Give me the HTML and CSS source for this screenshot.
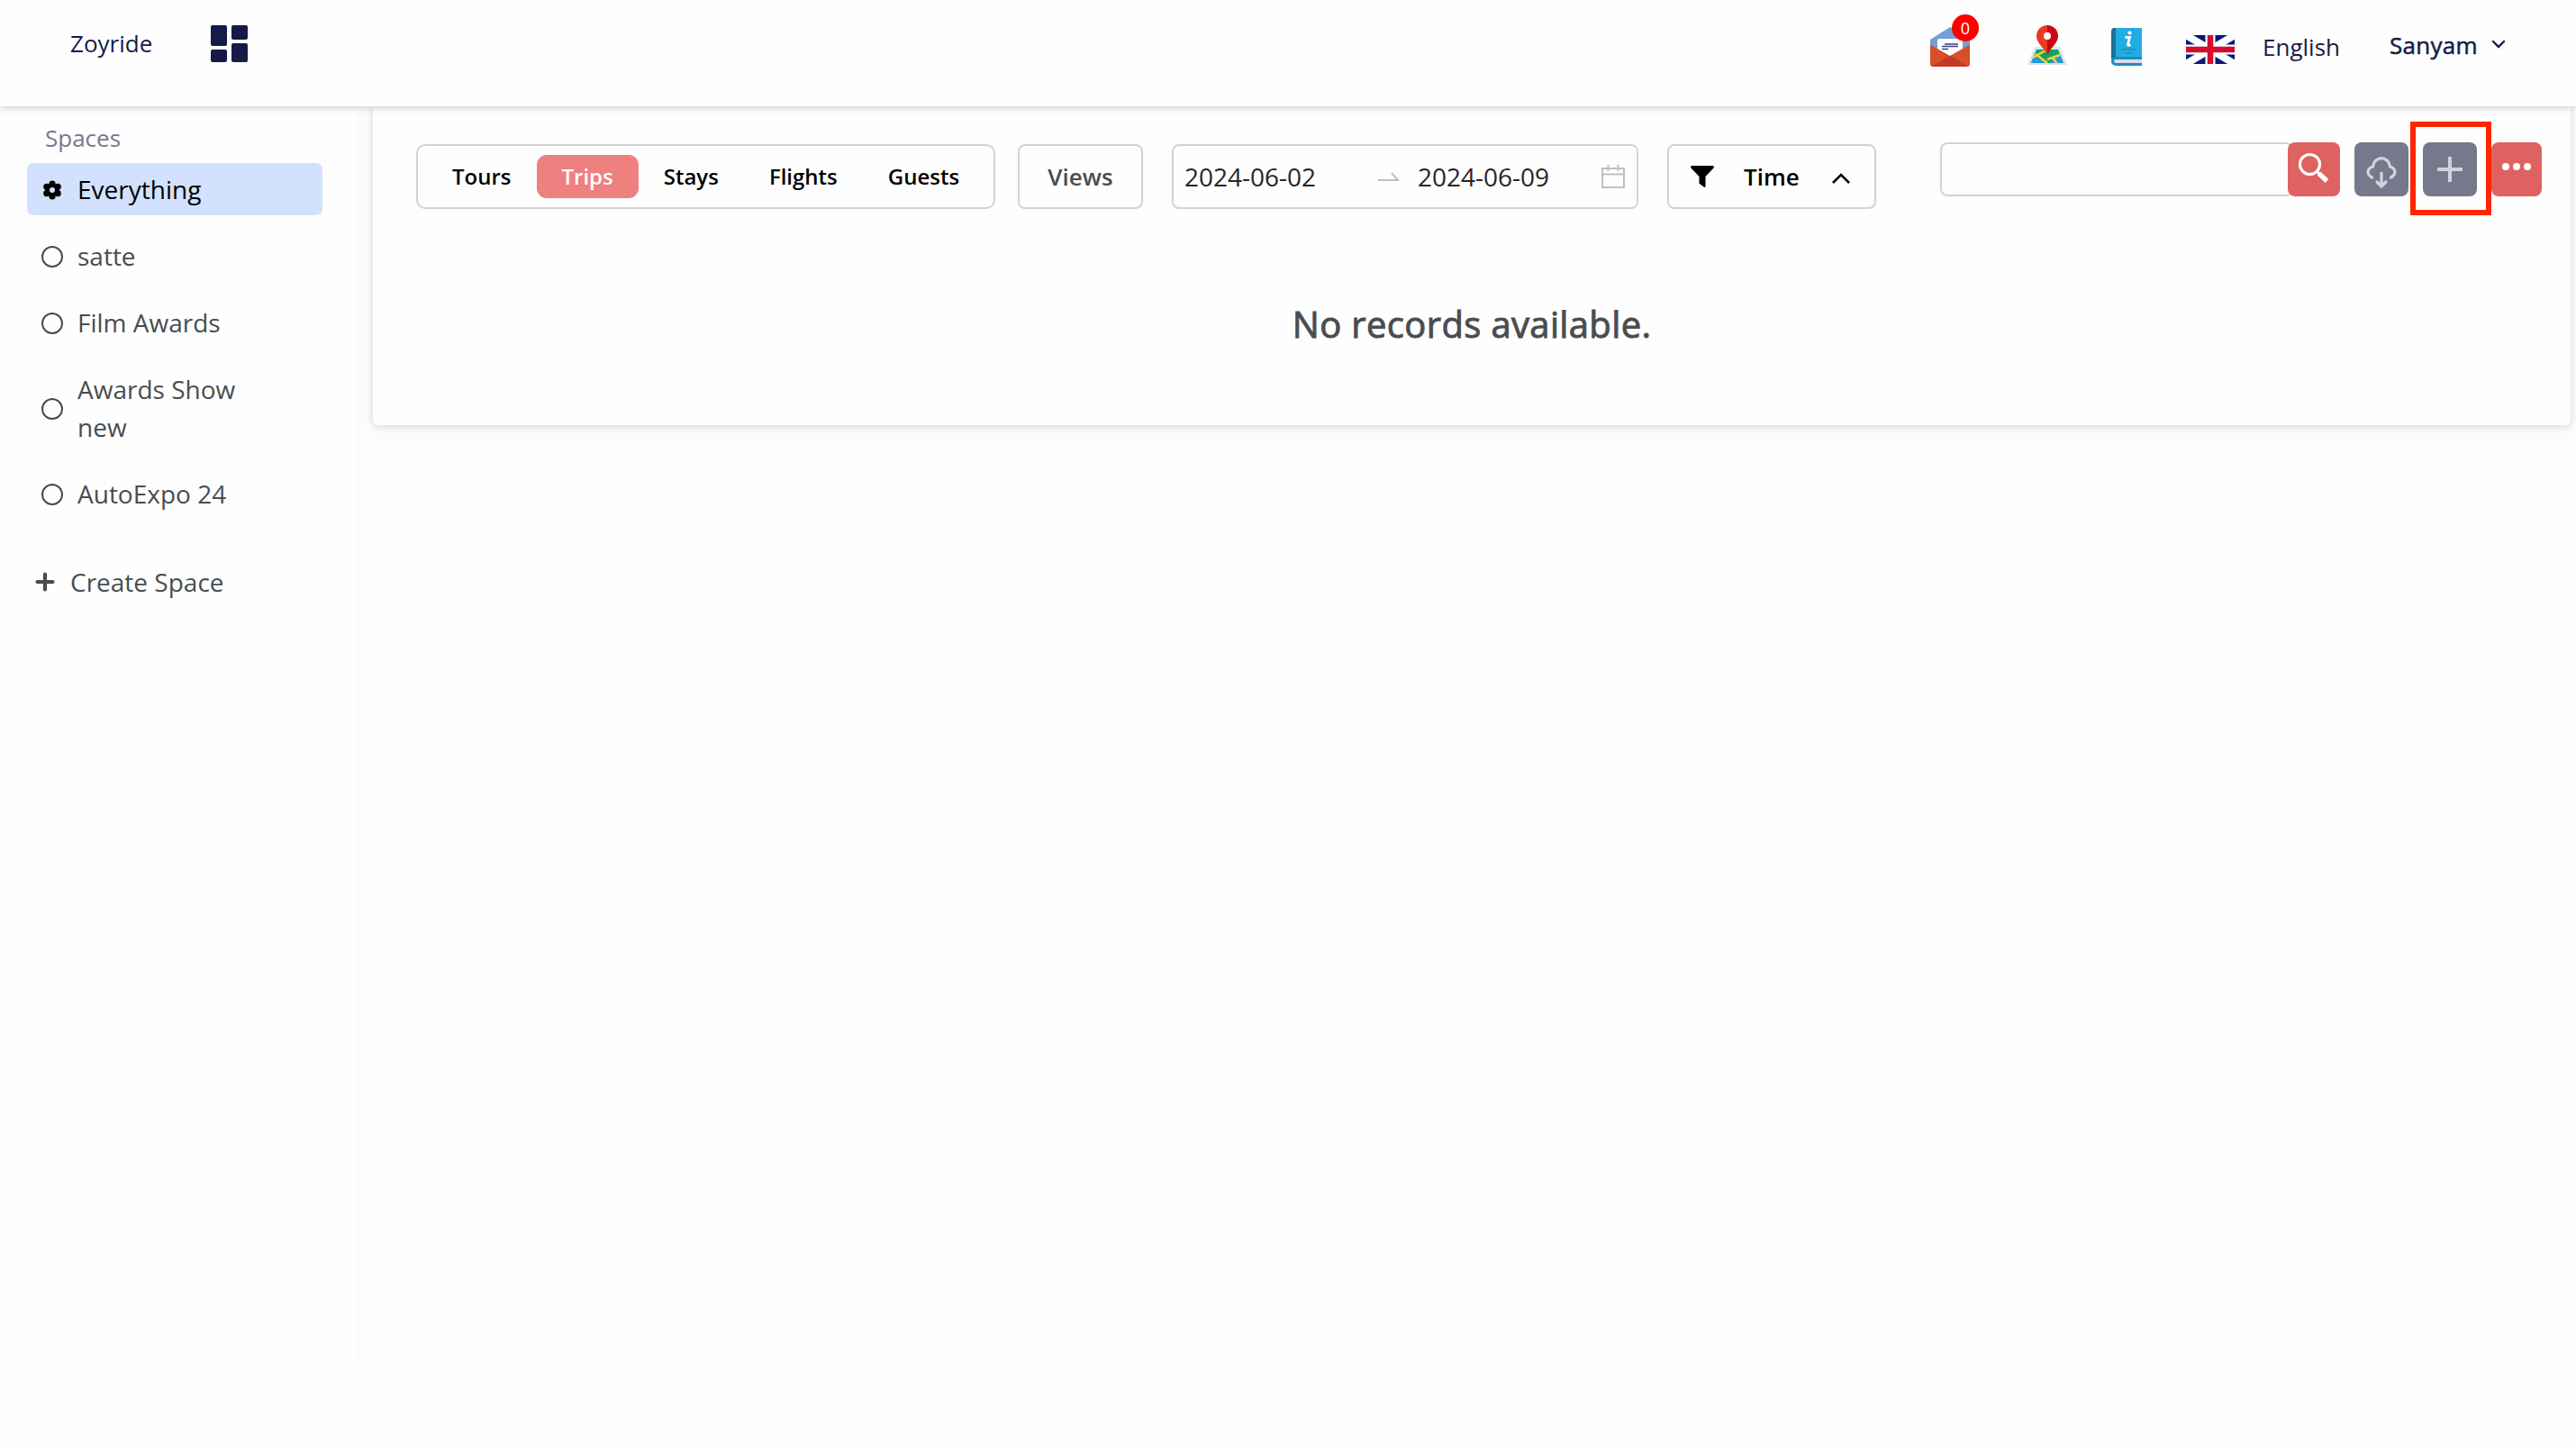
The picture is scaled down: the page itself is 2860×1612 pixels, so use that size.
FILE: index.html
```html
<!DOCTYPE html>
<html lang="en">
  <head>
    <meta charset="UTF-8" />
    <meta name="viewport" content="width=device-width, initial-scale=1.0" />
    <title>Zoyride</title>
    <link rel="stylesheet" href="styles.css">
  </head>
  <body>
    <header class="topbar">
      <a class="brand">Zoyride</a>
      <svg class="dashboard-icon" viewBox="0 0 41 41" fill="#161a49">
        <rect width="18" height="23" rx="2" />
        <rect x="23" width="18" height="16" rx="2" />
        <rect y="27" width="18" height="14" rx="2" />
        <rect x="23" y="20" width="18" height="21" rx="2" />
      </svg>

      <div class="topbar-right">
        <div class="mail">
          <svg width="44" height="44" viewBox="0 0 44 44">
            <path d="M0 14 22 0l22 14v10H0z" fill="#739fd6" />
            <rect x="8" y="13" width="28" height="26" rx="2" fill="#fff" />
            <path d="M16 19h15M13 21.500h18M13 24.500h7" stroke="#3f3f7d" stroke-width="1.700" />
            <path d="M0 19.500 22 32l22-12.500V41a3 3 0 0 1-3 3H3a3 3 0 0 1-3-3z" fill="#d84f2b" />
            <path d="M2 43.500 22 32l20 11.500-1 .5H3z" fill="#c13a27" />
          </svg>
          <span class="badge">0</span>
        </div>

        <!-- map -->
        <svg class="map" width="44" height="46" viewBox="0 0 44 46">
          <path d="M8 24h28l8 20H0z" fill="#d5e5f7" />
          <path d="M10 27h24l6 15H4z" fill="#12a45b" />
          <path d="M4 42l3-8 14 8z" fill="#2499dc" />
          <path d="M30 33l7 2 3 7H25z" fill="#2499dc" />
          <path d="M6 36l14-8M9 32l13 10M22 38l14-5M28 36l5 7" stroke="#f5cf48" stroke-width="2.500" />
          <path d="M22 34c-1-7-12-13-12-22a12 12 0 0 1 12-12z" fill="#e93a1f" />
          <path d="M22 34c1-7 12-13 12-22A12 12 0 0 0 22 0z" fill="#c90813" />
          <circle cx="22" cy="12" r="4" fill="#fff" />
        </svg>

        <!-- guide book -->
        <svg class="book" width="34" height="42" viewBox="0 0 34 42">
          <path d="M4 0h29a1 1 0 0 1 1 1v33H4a4 4 0 0 1-4-1V4a4 4 0 0 1 4-4z" fill="#22ade2" />
          <path d="M4 0h1v33H4a4 4 0 0 0-4 4V4a4 4 0 0 1 4-4z" fill="#1b7197" />
          <path d="M5 32h29v10H5a5 5 0 0 1 0-10z" fill="#1b8dba" />
          <path d="M5 35h29v4H5a2 2 0 0 1 0-4z" fill="#d5dcf0" />
          <circle cx="20.500" cy="5.500" r="2.100" fill="#fff" />
          <path d="M15.500 10.500h5l-2 8q0 1.500 3 0" fill="none" stroke="#fff" stroke-width="2.800" />
          <path d="M11 24h16M15 28h8" stroke="#1b7fa8" stroke-width="1.200" />
        </svg>

        <!-- language -->
        <svg class="flag" width="54" height="32" viewBox="0 0 54 32">
          <rect width="54" height="32" fill="#001b7a" />
          <path d="M0 0l54 32M54 0L0 32" stroke="#fff" stroke-width="8" />
          <path d="M27 0v32M0 16h54" stroke="#fff" stroke-width="11" />
          <path d="M27 0v32M0 16h54" stroke="#d30d2c" stroke-width="6.500" />
        </svg>
        <span class="language">English</span>
        <span class="user">Sanyam</span>
        <svg class="user-arrow" width="16" height="10" viewBox="0 0 16 10" fill="none" stroke="#161a49" stroke-width="2.400">
          <path d="M2 2l6 6 6-6" stroke-linecap="round" />
        </svg>
      </div>
    </header>

    <div class="layout">
      <aside class="sidebar">
        <h2 class="sidebar-title">Spaces</h2>
        <ul class="spaces">
          <li class="active">
            <svg class="gear" width="20" height="22" viewBox="0 0 20 22">
              <g fill="#000">
                <circle cx="10" cy="11" r="7.500" />
                <circle cx="10" cy="4" r="3.600" />
                <circle cx="10" cy="18" r="3.600" />
                <circle cx="3.800" cy="7.300" r="3.600" />
                <circle cx="16.200" cy="7.300" r="3.600" />
                <circle cx="3.800" cy="14.700" r="3.600" />
                <circle cx="16.200" cy="14.700" r="3.600" />
              </g>
              <circle cx="10" cy="11" r="3" fill="#d2e1fd" />
            </svg>
            <span>Everything</span>
          </li>
          <li><i class="ring"></i><span>satte</span></li>
          <li><i class="ring"></i><span>Film Awards</span></li>
          <li><i class="ring"></i><span>Awards Show new</span></li>
          <li><i class="ring"></i><span>AutoExpo 24</span></li>
        </ul>
        <a class="create-space">
          <svg width="22" height="22" viewBox="0 0 22 22" stroke="#484d50" stroke-width="4.200" stroke-linecap="round">
            <path d="M11 2.500v17M2.500 11h17" />
          </svg>
          <span>Create Space</span>
        </a>
      </aside>

      <main class="content">
        <section class="card">
          <div class="toolbar">
            <nav class="tabs">
              <a class="tab">Tours</a>
              <a class="tab selected">Trips</a>
              <a class="tab">Stays</a>
              <a class="tab">Flights</a>
              <a class="tab">Guests</a>
            </nav>
            <button class="views">Views</button>
            <div class="date-range">
              <span class="date">2024-06-02</span>
              <svg class="range-arrow" width="24" height="12" viewBox="0 0 24 12" fill="none" stroke="#bfbfbf" stroke-width="2">
                <path d="M0 10h22l-7-8" />
              </svg>
              <span class="date">2024-06-09</span>
              <svg class="calendar" width="26" height="26" viewBox="0 0 26 26" fill="none" stroke="#bfbfbf" stroke-width="2">
                <path d="M1 4h24v21H1zM1 10.500h24M7.500 0v7M18.500 0v7" />
              </svg>
            </div>
            <button class="time">
              <svg width="26" height="24" viewBox="0 0 26 24">
                <path d="M1.500 0h23a1.400 1.400 0 0 1 1 2.400L16.500 12v11a1 1 0 0 1-1.600.7L10 20a1 1 0 0 1-.5-1v-7L.5 2.400A1.400 1.400 0 0 1 1.500 0z" />
              </svg>
              <span>Time</span>
              <svg class="time-arrow" width="20" height="12" viewBox="0 0 20 12" fill="none" stroke="#000" stroke-width="2.600">
                <path d="M1 11l9-9 9 9" />
              </svg>
            </button>

            <div class="actions">
              <input class="search-input" type="text" />
              <button class="btn search-btn">
                <svg width="36" height="36" viewBox="0 0 36 36" fill="none" stroke="#fff">
                  <circle cx="13.500" cy="13.500" r="11" stroke-width="3.200" />
                  <path d="M21.500 21.500l3 3" stroke-width="3" />
                  <path d="M23.500 23.500l9 8.500" stroke-width="5.200" />
                </svg>
              </button>
              <button class="btn cloud-btn">
                <svg width="34" height="36" viewBox="0 0 34 36" fill="none" stroke="#d2d4dc" stroke-width="3.200" stroke-linecap="round">
                  <path d="M6.500 23c-6-3-6-10 1-12C9-1.500 25-1.500 26.500 11c7 2 7 9 1 12" />
                  <path d="M17 18v14M12 28l5 5 5-5" />
                </svg>
              </button>
              <button class="btn add-btn">
                <svg width="28" height="28" viewBox="0 0 28 28" stroke="#d2d4dc" stroke-width="4">
                  <path d="M14 0v28M0 14h28" />
                </svg>
                <span class="highlight"></span>
              </button>
              <button class="btn more-btn">
                <svg width="32" height="8" viewBox="0 0 32 8" fill="#fff">
                  <circle cx="4" cy="4" r="4" />
                  <circle cx="16" cy="4" r="4" />
                  <circle cx="28" cy="4" r="4" />
                </svg>
              </button>
            </div>
          </div>
          <p class="empty">No records available.</p>
        </section>
      </main>
    </div>
  </body>
</html>
```
FILE: styles.css
```css
* {
  box-sizing: border-box;
}

body {
  margin: 0;
  background: #fefefe;
  font-family: "Open Sans", "Noto Sans", sans-serif;
  color: #484d50;
}

button {
  font-family: inherit;
  cursor: pointer;
}

svg {
  display: block;
  flex-shrink: 0;
}

/* top bar */
.topbar {
  position: relative;
  z-index: 10;
  display: flex;
  align-items: flex-start;
  height: 118px;
  padding: 0 78px 0 78px;
  background: #fefefe;
  box-shadow: 0 2px 8px rgba(0, 0, 0, 0.18);
  color: #161a49;
  font-size: 26px;
  line-height: 36px;
}

.brand {
  width: 156px;
  padding-top: 30px;
}

.dashboard-icon {
  width: 41px;
  height: 41px;
  margin-top: 28px;
}

.topbar-right {
  display: flex;
  align-items: flex-start;
  margin-left: auto;
}

.mail {
  position: relative;
  margin: 30px 64px 0 0;
}

.badge {
  position: absolute;
  top: -14px;
  left: 24px;
  width: 30px;
  height: 30px;
  border-radius: 50%;
  background: #fe0000;
  color: #fff;
  font-size: 18px;
  line-height: 30px;
  text-align: center;
}

.map {
  margin: 28px 49px 0 0;
}

.book {
  margin: 31px 49px 0 0;
}

.flag {
  margin: 39px 31px 0 0;
}

.language {
  width: 141px;
  padding-top: 34px;
}

.user {
  width: 113px;
  padding-top: 32px;
  letter-spacing: 0.3px;
  -webkit-text-stroke: 0.5px #161a49;
}

.user-arrow {
  margin-top: 44px;
}

/* page */
.layout {
  display: flex;
  height: 1395px;
}

.sidebar {
  width: 396px;
  padding: 16px 38px 0 30px;
  font-size: 28px;
  line-height: 42px;
}

.sidebar-title {
  margin: 0 0 8px 20px;
  color: #77788c;
  font-size: 26px;
  font-weight: 400;
  line-height: 39px;
}

.spaces {
  margin: 0;
  padding: 0;
  list-style: none;
}

.spaces li {
  display: flex;
  align-items: center;
  gap: 16px;
  margin-bottom: 16px;
  padding: 8px 56px 8px 16px;
  border-radius: 7px;
}

.spaces .active {
  background: #d2e1fd;
  color: #000;
}

.gear {
  margin: 2px 2px 0;
}

.ring {
  flex-shrink: 0;
  width: 24px;
  height: 24px;
  margin-top: 2px;
  border: 2px solid #484d50;
  border-radius: 50%;
}

.create-space {
  display: flex;
  align-items: center;
  gap: 17px;
  margin: 48px 0 0 9px;
}

.content {
  flex: 1;
  padding: 0 6px 0 18px;
  background: #fcfcfe;
}

.card {
  height: 354px;
  background: #fefefe;
  border-radius: 0 0 6px 6px;
  box-shadow: 0 2px 8px rgba(40, 45, 70, 0.18);
}

/* toolbar */
.toolbar {
  display: flex;
  align-items: flex-start;
  padding: 42px 32px 0 48px;
}

.tabs,
.views,
.date-range,
.time {
  display: flex;
  align-items: center;
  height: 72px;
  border: 2px solid #d3d3d3;
  border-radius: 8px;
  background: #fefefe;
}

.tabs {
  width: 643px;
  padding-left: 10px;
  border-radius: 10px;
}

.tab {
  padding: 0 28px;
  border-radius: 11px;
  color: #000;
  font-size: 24px;
  font-weight: 600;
  line-height: 48px;
}

.tab.selected {
  background: #ef8080;
  color: #fff;
}

.views {
  justify-content: center;
  width: 139px;
  margin-left: 25px;
  color: #484d50;
  font-size: 26px;
  font-weight: 600;
}

.date-range {
  width: 518px;
  margin-left: 32px;
  padding-left: 12px;
  color: #262626;
  font-size: 28px;
}

.date {
  width: 148px;
}

.range-arrow {
  margin: 0 20px 0 67px;
}

.calendar {
  margin-left: 56px;
}

.time {
  width: 232px;
  margin-left: 32px;
  padding: 0 0 0 24px;
  color: #000;
  font-size: 26px;
  font-weight: 600;
}

.time span {
  width: 98px;
  margin-left: 33px;
  text-align: left;
}

.time-arrow {
  margin-top: 3px;
}

.actions {
  display: flex;
  margin: -2px 0 0 auto;
}

.search-input {
  width: 392px;
  height: 60px;
  border: 2px solid #d0d3d6;
  border-radius: 8px;
  background: #fefefe;
}

.btn {
  display: flex;
  justify-content: center;
  position: relative;
  width: 60px;
  height: 60px;
  padding: 0;
  border: none;
  border-radius: 8px;
}

.search-btn,
.more-btn {
  background: #de6260;
}

.search-btn {
  width: 58px;
  margin-left: -6px;
  padding-top: 11px;
}

.cloud-btn,
.add-btn {
  margin-left: 16px;
  background: #76788c;
}

.cloud-btn {
  padding-top: 16px;
}

.add-btn {
  padding-top: 16px;
}

.more-btn {
  width: 56px;
  margin-left: 16px;
  padding-top: 23px;
}

/* red frame over the add button */
.highlight {
  position: absolute;
  top: -23px;
  left: -14px;
  width: 90px;
  height: 104px;
  border: 6px solid #fe2600;
}

.empty {
  margin: 98px 0 0;
  color: #484d50;
  font-size: 40px;
  letter-spacing: 0.35px;
  line-height: 60px;
  text-align: center;
  -webkit-text-stroke: 0.9px #484d50;
}
```
